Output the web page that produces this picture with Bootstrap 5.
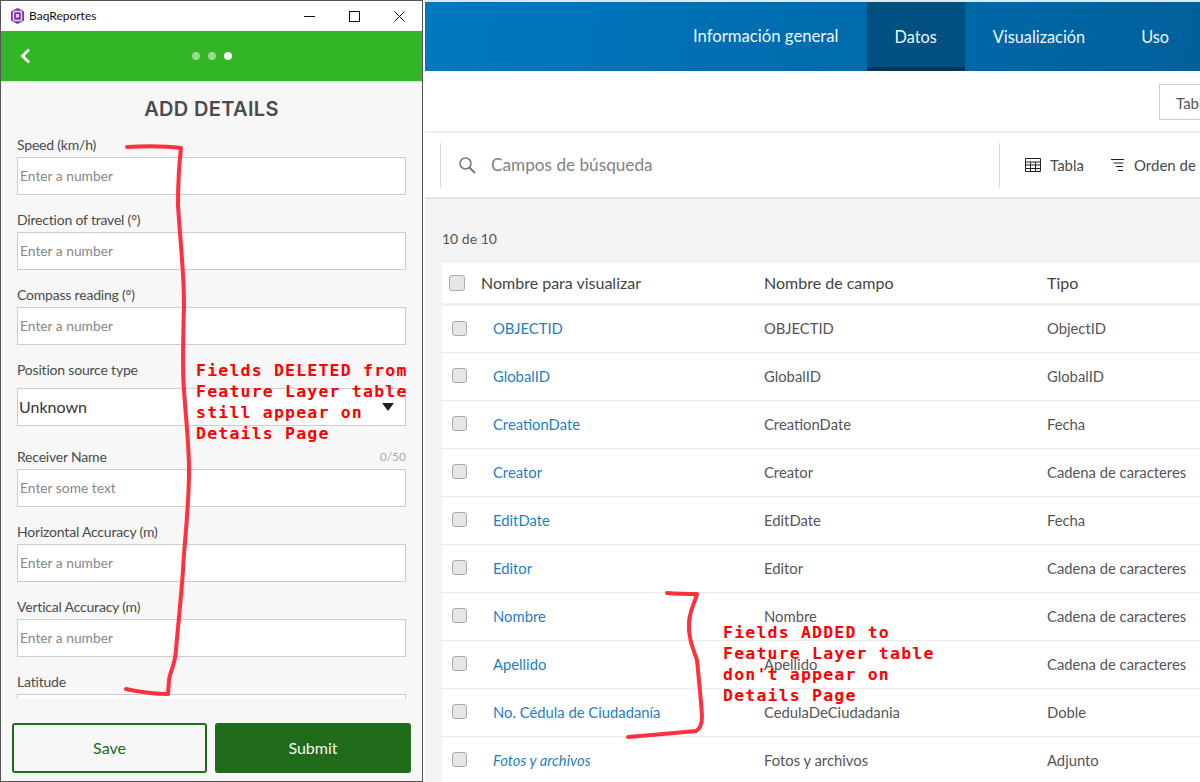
<!DOCTYPE html>
<html lang="es">
<head>
    <meta charset="UTF-8">
    <meta name="viewport" content="width=device-width, initial-scale=1.0">
    <title>BaqReportes</title>
    <link href="https://cdn.jsdelivr.net/npm/bootstrap@5.3.0/dist/css/bootstrap.min.css" rel="stylesheet">
    <style>
        html, body { height: 782px; overflow: hidden; }
        body { font-family: "Lato", sans-serif; background: #fff; position: relative; }

        /* ventana izquierda */
        .app-window { width: 423px; height: 782px; border: 1px solid #555; background: #f7f7f7; flex: none; }
        .title-bar { height: 30px; background: #fff; font-size: 12px; color: #111; padding-left: 9px; flex: none; }
        .win-controls { gap: 34px; padding-right: 17px; }
        .green-bar { height: 50px; background: #33b528; padding-left: 19px; position: relative; flex: none; box-shadow: 0 1px 0 #e2e2e2; }
        .step-dots { position: absolute; left: 191px; top: 21px; gap: 8px; }
        .step-dot { width: 8px; height: 8px; border-radius: 50%; background: #99da93; }
        .step-dot.on { background: #f2fbf1; }
        .form-scroll { height: 618px; overflow: hidden; padding: 0 16px; flex: none; }
        .form-heading { font-family: "Inter", sans-serif; font-size: 20px; font-weight: 600; letter-spacing: .35px; color: #4a4a4a; margin: 16px 0 14px; height: 24px; line-height: 24px; }
        .field-block { margin-bottom: 15px; }
        .select-block { margin-bottom: 21px; }
        .field-label { font-size: 14px; line-height: 20px; color: #4b4b4b; margin-bottom: 2px; letter-spacing: -.2px; }
        .field-count { font-size: 12px; color: #aaa; letter-spacing: 0; }
        .app-input.form-control, .app-input.form-select { height: 38px; border: 1px solid #cdcdcd; border-radius: 0; padding: 0 2px 2px; font-size: 13.8px; color: #333; background-color: #fff; }
        .app-input::placeholder { color: #878787; opacity: 1; }
        .app-input.form-select { font-size: 16px; background-image: none; color: #333; padding: 0 1px; }
        .select-box { position: relative; }
        .select-box::after { content: ""; position: absolute; right: 12px; top: 15px; border: 6px solid transparent; border-top: 8px solid #222; border-bottom: 0; }
        .form-actions { padding: 24px 11px 0 11px; gap: 8px; }
        .act-btn { flex: 1; height: 50px; font-size: 16px; border-radius: 3px; border: 2px solid #206b1a; }
        .act-save { flex: 0 0 195px; background: #f7f7f7; color: #206b1a; }
        .act-submit { background: #206b1a; color: #f5f5f5; }

        /* panel derecho */
        .right-side { flex: 1; min-width: 0; margin-left: 2px; overflow: hidden; background: #f3f3f3; }
        .top-nav { height: 71px; border-top: 2px solid #e4e7e9; background: linear-gradient(100deg, #0079c1 0%, #006aaa 60%, #00609c 100%); color: #fff; font-size: 16.7px; padding-left: 240px; flex: none; }
        .top-nav-item { padding: 0 28px; height: 69px; line-height: 69px; white-space: nowrap; color: #eef6fb; }
        .top-nav-item + .top-nav-item { font-size: 16.3px; }
        .top-nav-item.active-tab { background: #005082; border-bottom: 4px solid #00365a; }
        .sub-bar { height: 62px; background: #fff; border-bottom: 2px solid #ececec; padding: 13px 0 0 734px; flex: none; }
        .view-pick { width: 80px; height: 36px; border: 1px solid #ccc; font-size: 15px; color: #555; padding: 7px 0 0 16px; background: #fff; }
        .search-bar { height: 66px; background: #fff; border-bottom: 2px solid #e6e6e6; padding: 10px 0 10px 15px; flex: none; }
        .search-box { width: 560px; height: 44px; border-left: 1px solid #d8d8d8; border-right: 1px solid #d8d8d8; color: #828282; font-size: 17.2px; padding-left: 17px; gap: 14px; flex: none; }
        .tool-link { font-size: 15px; color: #4a4a4a; gap: 9px; white-space: nowrap; margin-left: 25px; }
        .tool-link + .tool-link { margin-left: 26px; }
        .count-line { font-size: 14px; color: #555; padding: 30px 0 14px 17px; line-height: 20px; }
        .table-wrap { margin-left: 17px; width: 780px; }
        .field-table { table-layout: fixed; width: 780px; margin: 0; background: #fff; color: #555; font-size: 14.8px; }
        .field-table th, .field-table td { padding: 0; vertical-align: middle; border-bottom: 1px solid #eaeaea; box-shadow: none; position: relative; }
        .field-table thead th { height: 41px; font-weight: 400; font-size: 16px; color: #444; border-bottom: 3px solid #efefef; }
        .field-table tbody td { height: 48px; }
        .field-table a { color: #1f7fbe; text-decoration: none; }
        .field-table .name-cell { padding-left: 51px; }
        .field-table .head-name { padding-left: 39px; }
        .row-check.form-check-input { width: 15px; height: 15px; margin: -8px 0 0; top: 50%; border: 1px solid #a9a9a9; border-radius: 3px; background-color: #e6e6e6; position: absolute; left: 10px; }
        .head-check.form-check-input { left: 7px; width: 16px; height: 16px; }

        /* anotaciones encima de la captura */
        .scribble { position: absolute; left: 0; top: 0; pointer-events: none; }
        .note-text { position: absolute; font-family: "DejaVu Sans Mono", monospace; font-weight: 700; font-size: 16.5px; letter-spacing: 1.2px; line-height: 21px; color: #ff0000; white-space: pre; }
        .note-left { left: 196px; top: 360px; }
        .note-right { left: 723px; top: 622px; }
    </style>
</head>
<body>
    <div class="d-flex">
        <div class="app-window d-flex flex-column">
            <div class="title-bar d-flex align-items-center justify-content-between">
                <div class="d-flex align-items-center gap-1">
                    <svg width="15" height="16" viewBox="0 0 15 16"><path d="M7.500 0 14 3.500v9L7.500 16 1 12.500v-9z" fill="#7b2fb5"/><rect x="3.500" y="3.500" width="8" height="9" rx="1" fill="none" stroke="#e9dcf3" stroke-width="1.500"/><rect x="6" y="6" width="3" height="3.500" fill="#e9dcf3"/></svg>
                    <span>BaqReportes</span>
                </div>
                <div class="d-flex align-items-center win-controls">
                    <svg width="11" height="11" viewBox="0 0 11 11"><path d="M0 5.500h11" stroke="#111"/></svg>
                    <svg width="11" height="11" viewBox="0 0 11 11"><rect x=".5" y=".5" width="10" height="10" fill="none" stroke="#111"/></svg>
                    <svg width="11" height="11" viewBox="0 0 11 11"><path d="M.5.500l10 10M10.500.500l-10 10" stroke="#111" fill="none"/></svg>
                </div>
            </div>
            <div class="green-bar d-flex align-items-center">
                <svg width="11" height="16" viewBox="0 0 11 16"><path d="M9 1.500 2.500 8 9 14.500" fill="none" stroke="#fff" stroke-width="2.800"/></svg>
                <div class="step-dots d-flex">
                    <span class="step-dot"></span><span class="step-dot"></span><span class="step-dot on"></span>
                </div>
            </div>
            <div class="form-scroll">
                <div class="form-heading text-center">ADD DETAILS</div>
                <div class="field-block">
                    <div class="field-label">Speed (km/h)</div>
                    <input class="form-control app-input" placeholder="Enter a number">
                </div>
                <div class="field-block">
                    <div class="field-label">Direction of travel (°)</div>
                    <input class="form-control app-input" placeholder="Enter a number">
                </div>
                <div class="field-block">
                    <div class="field-label">Compass reading (°)</div>
                    <input class="form-control app-input" placeholder="Enter a number">
                </div>
                <div class="select-block">
                    <div class="field-label mb-2">Position source type</div>
                    <div class="select-box">
                        <select class="form-select app-input"><option>Unknown</option></select>
                    </div>
                </div>
                <div class="field-block">
                    <div class="field-label d-flex justify-content-between align-items-end"><span>Receiver Name</span><span class="field-count">0/50</span></div>
                    <input class="form-control app-input" placeholder="Enter some text">
                </div>
                <div class="field-block">
                    <div class="field-label">Horizontal Accuracy (m)</div>
                    <input class="form-control app-input" placeholder="Enter a number">
                </div>
                <div class="field-block">
                    <div class="field-label">Vertical Accuracy (m)</div>
                    <input class="form-control app-input" placeholder="Enter a number">
                </div>
                <div class="field-block">
                    <div class="field-label">Latitude</div>
                    <input class="form-control app-input">
                </div>
            </div>
            <div class="form-actions d-flex">
                <button class="act-btn act-save">Save</button>
                <button class="act-btn act-submit">Submit</button>
            </div>
        </div>

        <div class="right-side d-flex flex-column">
            <div class="top-nav d-flex">
                <div class="top-nav-item">Información general</div>
                <div class="top-nav-item active-tab">Datos</div>
                <div class="top-nav-item">Visualización</div>
                <div class="top-nav-item">Uso</div>
            </div>
            <div class="sub-bar">
                <div class="view-pick">Tabla</div>
            </div>
            <div class="search-bar d-flex align-items-center">
                <div class="search-box d-flex align-items-center">
                    <svg width="19" height="19" viewBox="0 0 19 19"><circle cx="7.500" cy="7.500" r="5.500" fill="none" stroke="#777" stroke-width="1.500"/><path d="M11.500 11.500 17 17" stroke="#777" stroke-width="2"/></svg>
                    <span>Campos de búsqueda</span>
                </div>
                <div class="d-flex align-items-center tool-link">
                    <svg width="16" height="14" viewBox="0 0 16 14"><path d="M.5.500h15v13H.5zM.5 4h15M.5 7h15M.5 10.500h15M5.500 4v9.500M10.500 4v9.500" fill="none" stroke="#222"/></svg>
                    <span>Tabla</span>
                </div>
                <div class="d-flex align-items-center tool-link">
                    <svg width="15" height="14" viewBox="0 0 15 14"><path d="M1 1.500h13M3.500 5h10M6 8.500h7M8 12.500h5" fill="none" stroke="#222"/></svg>
                    <span>Orden de campos</span>
                </div>
            </div>
            <div class="count-line">10 de 10</div>
            <div class="table-wrap">
                <table class="table field-table">
                    <colgroup><col style="width: 322px"><col style="width: 283px"><col></colgroup>
                    <thead>
                        <tr>
                            <th class="head-name"><input class="form-check-input row-check head-check" type="checkbox">Nombre para visualizar</th>
                            <th>Nombre de campo</th>
                            <th>Tipo</th>
                        </tr>
                    </thead>
                    <tbody id="fieldRows"></tbody>
                </table>
            </div>
        </div>
    </div>

    <svg class="scribble" width="1200" height="782" viewBox="0 0 1200 782" fill="none" stroke="#ff3040" stroke-width="4" stroke-linecap="round" stroke-linejoin="round">
        <path d="M127 147C145 146 165 146 181 148C179 165 178 185 178 205C180 240 184 270 184 305C183 340 183 380 184 390C186 420 189 445 189 470C189 510 184 545 183 570C181 600 178 625 176 650C175 665 170 672 169 680L168 694C155 694 140 692 126 689"/>
        <path d="M667 593C680 594 690 594 697 594C695 602 690 610 689 622C688 636 692 646 697 660C699 680 701 700 702 716C702 725 700 729 696 731C675 733 650 735 628 737"/>
    </svg>
    <div class="note-text note-left">Fields DELETED from
Feature Layer table
still appear on
Details Page</div>
    <div class="note-text note-right">Fields ADDED to
Feature Layer table
don't appear on
Details Page</div>

    <script>
        // filas de la tabla de campos
        const fields = [
            ['OBJECTID', 'OBJECTID', 'ObjectID'],
            ['GlobalID', 'GlobalID', 'GlobalID'],
            ['CreationDate', 'CreationDate', 'Fecha'],
            ['Creator', 'Creator', 'Cadena de caracteres'],
            ['EditDate', 'EditDate', 'Fecha'],
            ['Editor', 'Editor', 'Cadena de caracteres'],
            ['Nombre', 'Nombre', 'Cadena de caracteres'],
            ['Apellido', 'Apellido', 'Cadena de caracteres'],
            ['No. Cédula de Ciudadanía', 'CedulaDeCiudadania', 'Doble'],
            ['<em>Fotos y archivos</em>', 'Fotos y archivos', 'Adjunto']
        ];
        document.getElementById('fieldRows').innerHTML = fields.map(f =>
            `<tr><td class="name-cell"><input class="form-check-input row-check" type="checkbox"><a href="#">${f[0]}</a></td><td>${f[1]}</td><td>${f[2]}</td></tr>`
        ).join('');
    </script>
    <script src="https://cdn.jsdelivr.net/npm/bootstrap@5.3.0/dist/js/bootstrap.bundle.min.js"></script>
</body>
</html>
